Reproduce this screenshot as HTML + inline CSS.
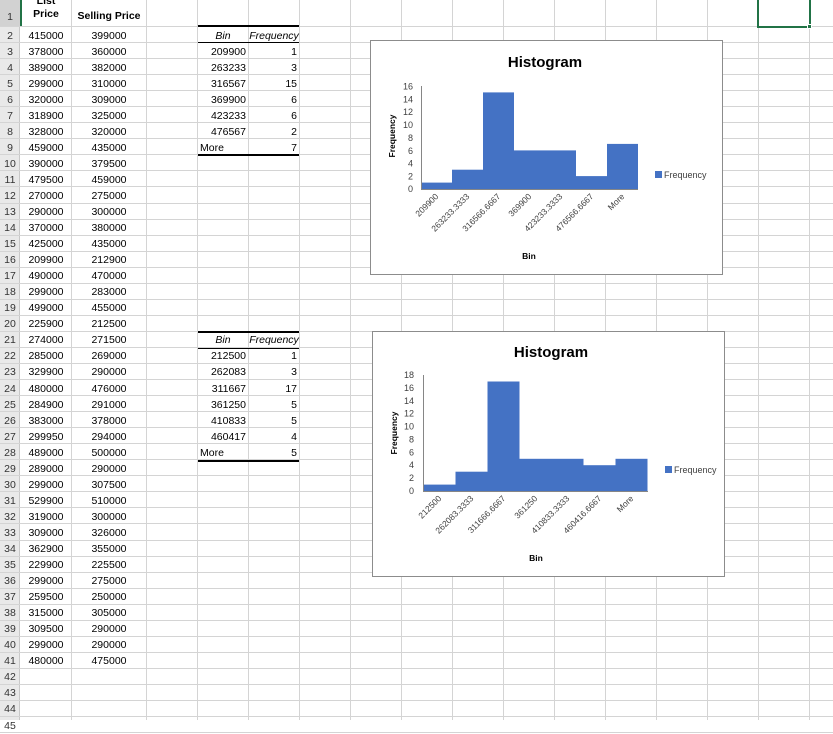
<!DOCTYPE html>
<html><head><meta charset="utf-8"><style>
*{margin:0;padding:0;box-sizing:border-box}
body{width:833px;height:720px;overflow:hidden;background:#fff;font-family:"Liberation Sans",sans-serif;font-size:10.5px;color:#000;position:relative}
.hdr{position:absolute;left:0;top:0;width:20px;height:720px;background:#e9e9e9;border-right:1px solid #c8c8c8}
.v{position:absolute;top:0;width:1px;height:720px;background:#d4d4d4}
#rows{position:absolute;left:0;top:0;width:833px}
.r{position:relative;height:16.05px;border-bottom:1px solid #d4d4d4;line-height:15px}
.r span{position:absolute;top:1.5px;white-space:nowrap}
.n{left:0;width:20px;text-align:center;color:#333}
.a{left:21px;width:50px;text-align:center}
.b{left:72px;width:74px;text-align:center}
.d{left:198px;width:48px;text-align:right}
.e{left:249px;width:48px;text-align:right}
.dl{left:200px}
.i{font-style:italic}
.tb{position:absolute;left:198px;width:101px;background:#000}
</style></head><body>
<div class="hdr"></div>
<div class="v" style="left:71px"></div><div class="v" style="left:146px"></div><div class="v" style="left:197px"></div><div class="v" style="left:248px"></div><div class="v" style="left:299px"></div><div class="v" style="left:350px"></div><div class="v" style="left:401px"></div><div class="v" style="left:452px"></div><div class="v" style="left:503px"></div><div class="v" style="left:554px"></div><div class="v" style="left:605px"></div><div class="v" style="left:656px"></div><div class="v" style="left:707px"></div><div class="v" style="left:758px"></div><div class="v" style="left:809px"></div>
<div style="position:absolute;left:0;top:0;width:20px;height:27px;background:#d2d2d2"></div>
<div style="position:absolute;left:20px;top:0;width:2px;height:27px;background:#217346"></div>
<div id="rows">
<div class="r" style="height:27px"><span class="n" style="top:10px">1</span><span class="a" style="top:-5px;font-weight:bold;line-height:13px">List<br>Price</span><span class="b" style="top:9px;font-weight:bold">Selling Price</span></div>
<div class="r"><span class="n">2</span><span class="a">415000</span><span class="b">399000</span><span class="d i" style="text-align:center;width:50px">Bin</span><span class="e i" style="text-align:center;width:50px">Frequency</span></div>
<div class="r"><span class="n">3</span><span class="a">378000</span><span class="b">360000</span><span class="d">209900</span><span class="e">1</span></div>
<div class="r"><span class="n">4</span><span class="a">389000</span><span class="b">382000</span><span class="d">263233</span><span class="e">3</span></div>
<div class="r"><span class="n">5</span><span class="a">299000</span><span class="b">310000</span><span class="d">316567</span><span class="e">15</span></div>
<div class="r"><span class="n">6</span><span class="a">320000</span><span class="b">309000</span><span class="d">369900</span><span class="e">6</span></div>
<div class="r"><span class="n">7</span><span class="a">318900</span><span class="b">325000</span><span class="d">423233</span><span class="e">6</span></div>
<div class="r"><span class="n">8</span><span class="a">328000</span><span class="b">320000</span><span class="d">476567</span><span class="e">2</span></div>
<div class="r"><span class="n">9</span><span class="a">459000</span><span class="b">435000</span><span class="dl">More</span><span class="e">7</span></div>
<div class="r"><span class="n">10</span><span class="a">390000</span><span class="b">379500</span></div>
<div class="r"><span class="n">11</span><span class="a">479500</span><span class="b">459000</span></div>
<div class="r"><span class="n">12</span><span class="a">270000</span><span class="b">275000</span></div>
<div class="r"><span class="n">13</span><span class="a">290000</span><span class="b">300000</span></div>
<div class="r"><span class="n">14</span><span class="a">370000</span><span class="b">380000</span></div>
<div class="r"><span class="n">15</span><span class="a">425000</span><span class="b">435000</span></div>
<div class="r"><span class="n">16</span><span class="a">209900</span><span class="b">212900</span></div>
<div class="r"><span class="n">17</span><span class="a">490000</span><span class="b">470000</span></div>
<div class="r"><span class="n">18</span><span class="a">299000</span><span class="b">283000</span></div>
<div class="r"><span class="n">19</span><span class="a">499000</span><span class="b">455000</span></div>
<div class="r"><span class="n">20</span><span class="a">225900</span><span class="b">212500</span></div>
<div class="r"><span class="n">21</span><span class="a">274000</span><span class="b">271500</span><span class="d i" style="text-align:center;width:50px">Bin</span><span class="e i" style="text-align:center;width:50px">Frequency</span></div>
<div class="r"><span class="n">22</span><span class="a">285000</span><span class="b">269000</span><span class="d">212500</span><span class="e">1</span></div>
<div class="r"><span class="n">23</span><span class="a">329900</span><span class="b">290000</span><span class="d">262083</span><span class="e">3</span></div>
<div class="r"><span class="n">24</span><span class="a">480000</span><span class="b">476000</span><span class="d">311667</span><span class="e">17</span></div>
<div class="r"><span class="n">25</span><span class="a">284900</span><span class="b">291000</span><span class="d">361250</span><span class="e">5</span></div>
<div class="r"><span class="n">26</span><span class="a">383000</span><span class="b">378000</span><span class="d">410833</span><span class="e">5</span></div>
<div class="r"><span class="n">27</span><span class="a">299950</span><span class="b">294000</span><span class="d">460417</span><span class="e">4</span></div>
<div class="r"><span class="n">28</span><span class="a">489000</span><span class="b">500000</span><span class="dl">More</span><span class="e">5</span></div>
<div class="r"><span class="n">29</span><span class="a">289000</span><span class="b">290000</span></div>
<div class="r"><span class="n">30</span><span class="a">299000</span><span class="b">307500</span></div>
<div class="r"><span class="n">31</span><span class="a">529900</span><span class="b">510000</span></div>
<div class="r"><span class="n">32</span><span class="a">319000</span><span class="b">300000</span></div>
<div class="r"><span class="n">33</span><span class="a">309000</span><span class="b">326000</span></div>
<div class="r"><span class="n">34</span><span class="a">362900</span><span class="b">355000</span></div>
<div class="r"><span class="n">35</span><span class="a">229900</span><span class="b">225500</span></div>
<div class="r"><span class="n">36</span><span class="a">299000</span><span class="b">275000</span></div>
<div class="r"><span class="n">37</span><span class="a">259500</span><span class="b">250000</span></div>
<div class="r"><span class="n">38</span><span class="a">315000</span><span class="b">305000</span></div>
<div class="r"><span class="n">39</span><span class="a">309500</span><span class="b">290000</span></div>
<div class="r"><span class="n">40</span><span class="a">299000</span><span class="b">290000</span></div>
<div class="r"><span class="n">41</span><span class="a">480000</span><span class="b">475000</span></div>
<div class="r"><span class="n">42</span></div>
<div class="r"><span class="n">43</span></div>
<div class="r"><span class="n">44</span></div>
<div class="r"><span class="n">45</span></div>
</div>
<div class="tb" style="top:25px;height:2px"></div>
<div class="tb" style="top:42px;height:1px"></div>
<div class="tb" style="top:154px;height:2px"></div>
<div class="tb" style="top:331px;height:2px"></div>
<div class="tb" style="top:348px;height:1px"></div>
<div class="tb" style="top:460px;height:2px"></div>
<div style="position:absolute;left:757px;top:-2px;width:54px;height:30px;border:2px solid #217346"></div>
<div style="position:absolute;left:807px;top:24px;width:5px;height:5px;background:#217346;border:1px solid #fff"></div>
<svg width="833" height="720" style="position:absolute;left:0;top:0" font-family="Liberation Sans, sans-serif">
<g>
<rect x="370.5" y="40.5" width="352" height="234" fill="#fff" stroke="#8c8c8c"/>
<text x="545" y="67" font-size="15" font-weight="bold" text-anchor="middle">Histogram</text>
<g fill="#4472c4">
<rect x="421" y="182.6" width="31" height="6.4"/><rect x="452" y="169.7" width="31" height="19.3"/><rect x="483" y="92.4" width="31" height="96.6"/><rect x="514" y="150.4" width="62" height="38.6"/><rect x="576" y="176.1" width="31" height="12.9"/><rect x="607" y="143.9" width="31" height="45.1"/>
</g>
<g stroke="#868686" stroke-width="1"><line x1="421.5" y1="86" x2="421.5" y2="189"/><line x1="421" y1="189.5" x2="638" y2="189.5"/></g>
<g font-size="9" text-anchor="end" fill="#404040"><text x="413" y="192">0</text><text x="413" y="179.6">2</text><text x="413" y="166.7">4</text><text x="413" y="153.8">6</text><text x="413" y="140.9">8</text><text x="413" y="128">10</text><text x="413" y="115.2">12</text><text x="413" y="102.3">14</text><text x="413" y="89.4">16</text></g>
<g font-size="8.5" text-anchor="end" fill="#404040">
<text transform="translate(439,197) rotate(-45)">209900</text><text transform="translate(470,197) rotate(-45)">263233.3333</text><text transform="translate(501,197) rotate(-45)">316566.6667</text><text transform="translate(532,197) rotate(-45)">369900</text><text transform="translate(563,197) rotate(-45)">423233.3333</text><text transform="translate(594,197) rotate(-45)">476566.6667</text><text transform="translate(625,197) rotate(-45)">More</text></g>
<text transform="translate(395,136) rotate(-90)" font-size="8.5" font-weight="bold" text-anchor="middle">Frequency</text>
<text x="529" y="259" font-size="8.5" font-weight="bold" text-anchor="middle">Bin</text>
<rect x="655" y="171" width="7" height="7" fill="#4472c4"/><text x="664" y="178" font-size="9" fill="#404040">Frequency</text>
</g>
<g>
<rect x="372.5" y="331.5" width="352" height="245" fill="#fff" stroke="#8c8c8c"/>
<text x="551" y="357" font-size="15" font-weight="bold" text-anchor="middle">Histogram</text>
<g fill="#4472c4">
<rect x="423.5" y="484.6" width="32" height="6.4"/><rect x="455.5" y="471.7" width="32" height="19.3"/><rect x="487.5" y="381.5" width="32" height="109.5"/><rect x="519.5" y="458.8" width="64" height="32.2"/><rect x="583.5" y="465.2" width="32" height="25.8"/><rect x="615.5" y="458.8" width="32" height="32.2"/>
</g>
<g stroke="#868686"><line x1="423.5" y1="375" x2="423.5" y2="491"/><line x1="423" y1="491.5" x2="648" y2="491.5"/></g>
<g font-size="9" text-anchor="end" fill="#404040"><text x="414" y="494">0</text><text x="414" y="481.1">2</text><text x="414" y="468.2">4</text><text x="414" y="455.4">6</text><text x="414" y="442.5">8</text><text x="414" y="429.6">10</text><text x="414" y="416.7">12</text><text x="414" y="403.8">14</text><text x="414" y="391">16</text><text x="414" y="378">18</text></g>
<g font-size="8.5" text-anchor="end" fill="#404040">
<text transform="translate(442,499) rotate(-45)">212500</text><text transform="translate(474,499) rotate(-45)">262083.3333</text><text transform="translate(506,499) rotate(-45)">311666.6667</text><text transform="translate(538,499) rotate(-45)">361250</text><text transform="translate(570,499) rotate(-45)">410833.3333</text><text transform="translate(602,499) rotate(-45)">460416.6667</text><text transform="translate(634,499) rotate(-45)">More</text></g>
<text transform="translate(397,433) rotate(-90)" font-size="8.5" font-weight="bold" text-anchor="middle">Frequency</text>
<text x="536" y="561" font-size="8.5" font-weight="bold" text-anchor="middle">Bin</text>
<rect x="665" y="466" width="7" height="7" fill="#4472c4"/><text x="674" y="473" font-size="9" fill="#404040">Frequency</text>
</g>
</svg>
</body></html>
